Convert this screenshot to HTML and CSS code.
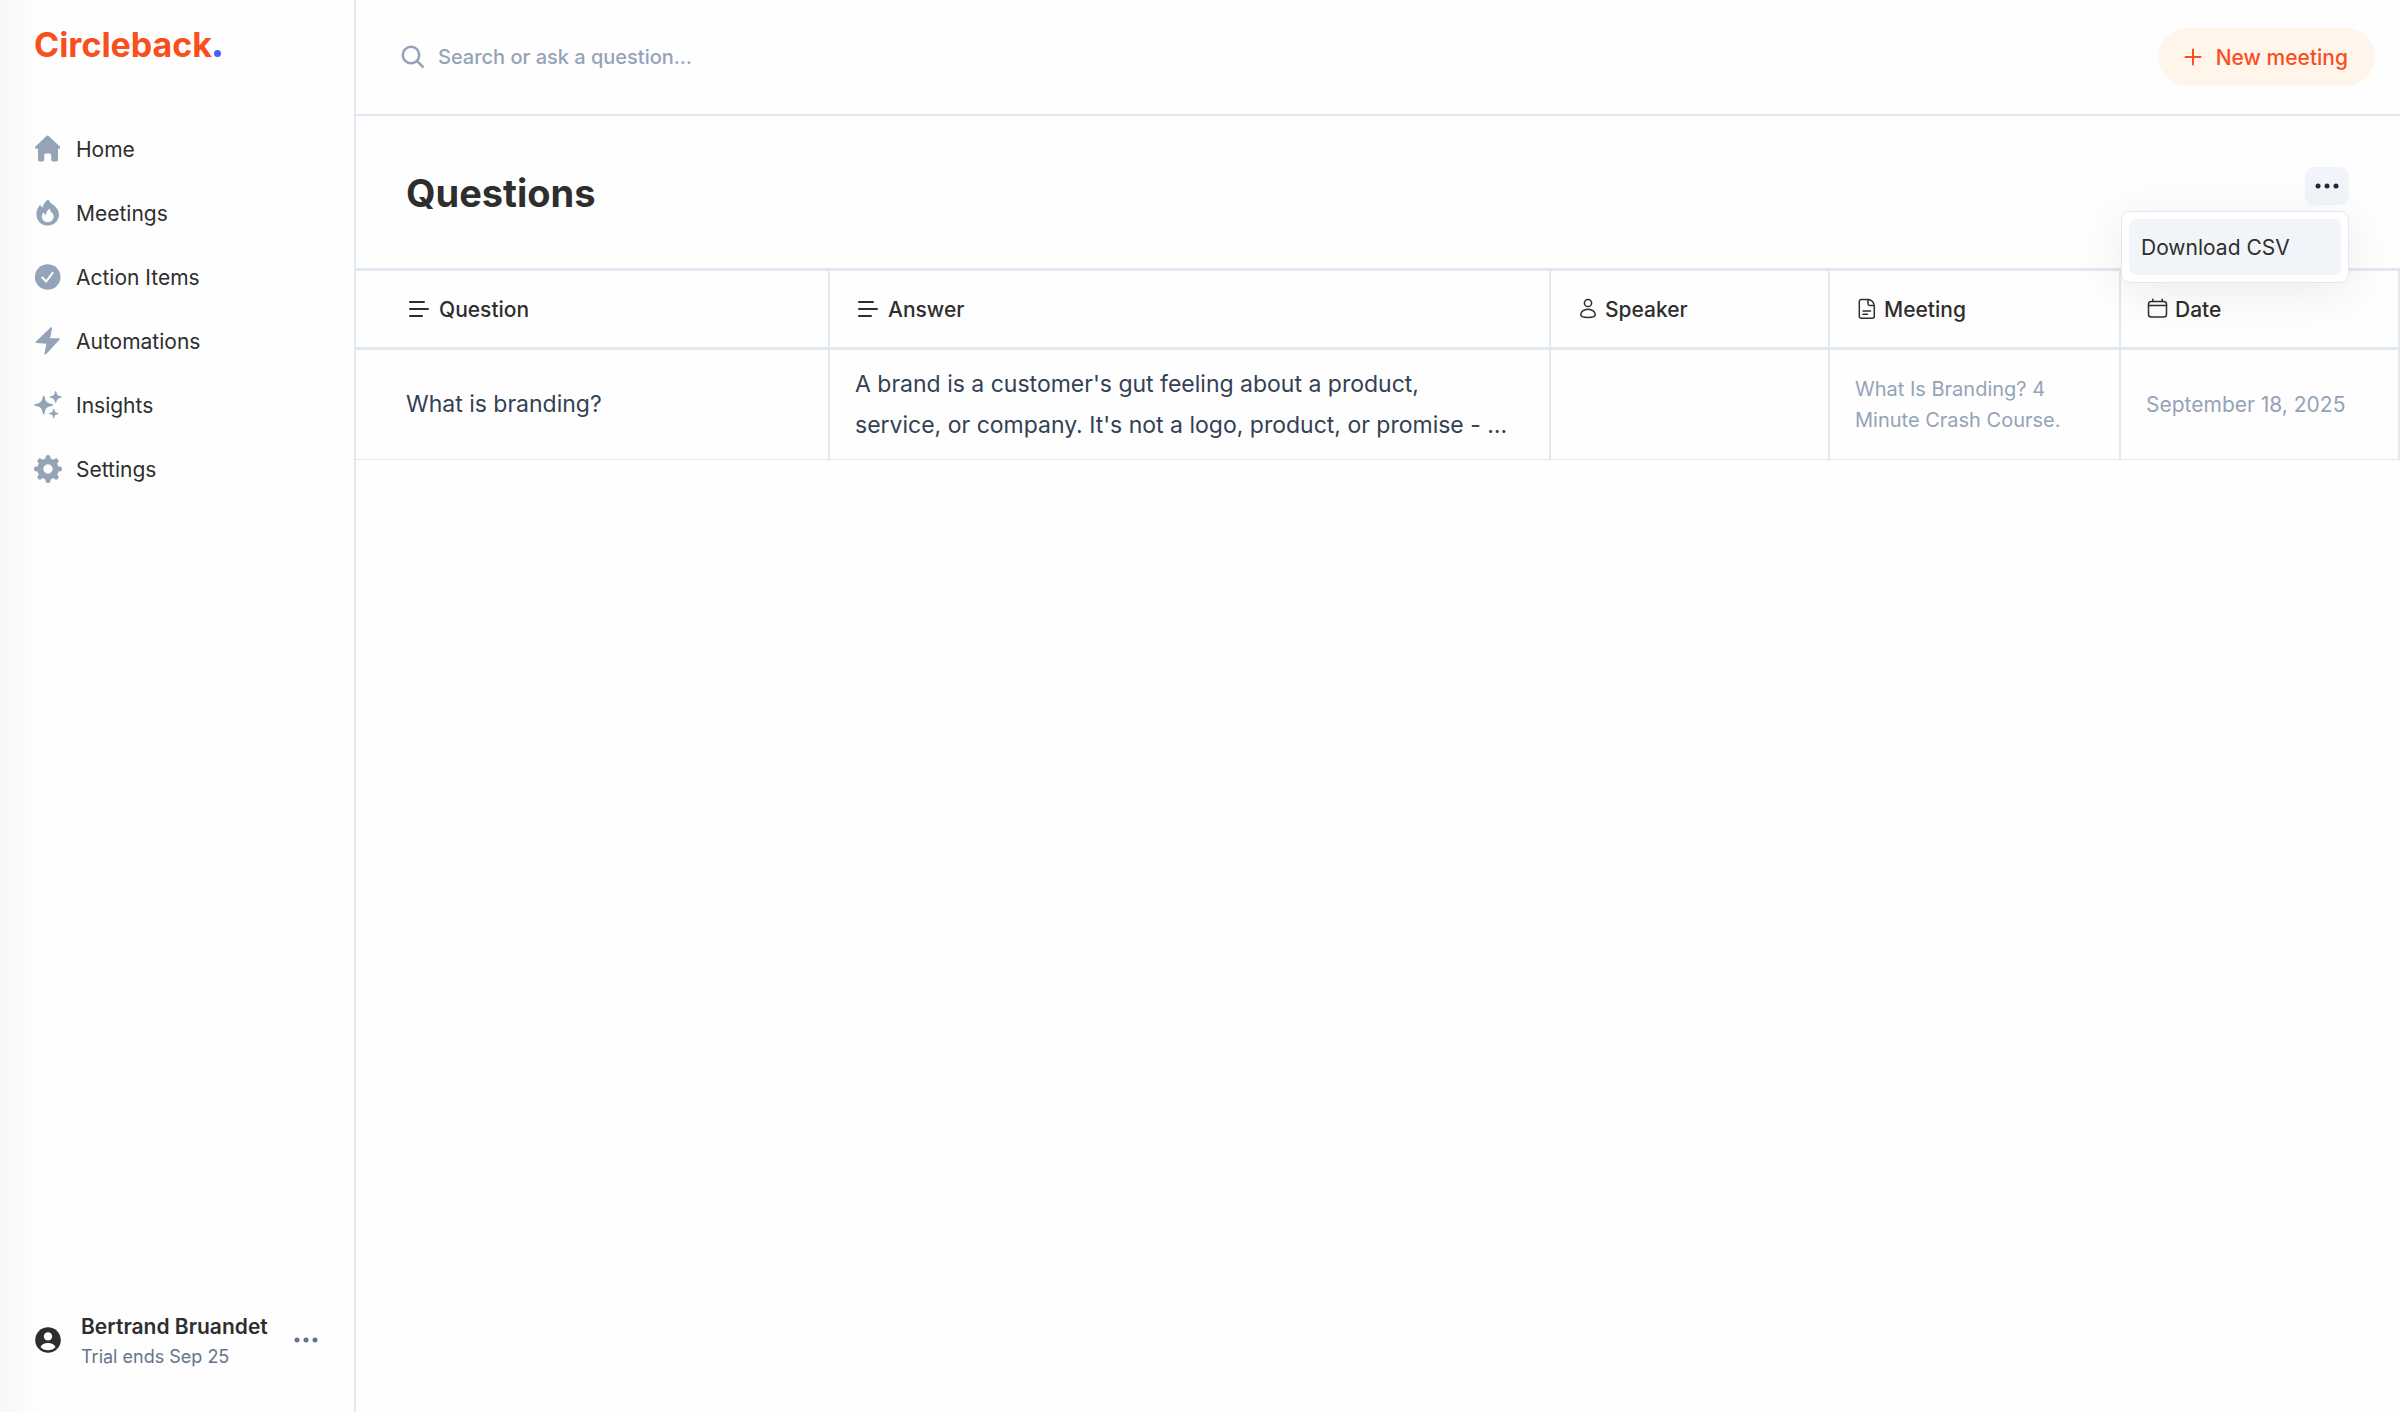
FILE: index.html
```html
<!DOCTYPE html>
<html lang="en">
<head>
    <meta charset="utf-8">
    <title>Questions - Circleback</title>
    <meta name="viewport" content="width=device-width, initial-scale=1">
    <link rel="stylesheet" href="styles.css">
</head>
<body>
    <aside class="sidebar">
        <a class="logo" href="#">Circleback<span class="logo-dot"></span></a>

        <nav class="nav">
            <a class="nav-link" href="#">
                <svg class="nav-icon" viewBox="0 0 28 28"><path d="M12.2 1.3a2 2 0 0 1 2.8 0L25.8 11.600c.8.8.3 2.100-.8 2.100H24v10.800a1.900 1.900 0 0 1-1.900 1.900h-3a1.900 1.900 0 0 1-1.900-1.900V20a1.500 1.500 0 0 0-1.500-1.500h-4A1.500 1.500 0 0 0 10.200 20v4.500a1.900 1.900 0 0 1-1.900 1.900H5.900A1.900 1.900 0 0 1 4 24.500V13.700H2.200c-1.100 0-1.600-1.300-.8-2.100z"/></svg>
                Home
            </a>
            <a class="nav-link" href="#">
                <svg class="nav-icon" viewBox="0 0 28 28"><path fill-rule="evenodd" d="M13 1.300c.6-.7 1.500-.6 2 .1 1.100 1.600 2 2.800 3.800 4.100 3.700 2.600 6.200 6 6.200 10 0 6.200-5 11-11.300 11S2.400 21.600 2.400 15.400c0-3.300 1-6.200 2.900-8.600.6-.8 1.500-.6 1.900.2.3.7.8 1.200 1.500 1.600.3-3 2-5.400 4.300-7.300zM15.300 9.900c-2.200 1.100-3.300 3.300-3.300 6.200-.9-.4-1.500-1-1.900-1.800-.3-.6-.9-.7-1.300-.1-.7 1-1 2.100-1 3.300 0 3.300 2.600 5.700 6 5.700 3.300 0 5.900-2.400 5.900-5.700 0-1.600-.8-3-1.900-3.900-1-.8-1.600-1.900-1.600-3.100 0-.5-.4-.8-.9-.6z"/></svg>
                Meetings
            </a>
            <a class="nav-link" href="#">
                <svg class="nav-icon" viewBox="0 0 28 28"><circle cx="13.700" cy="14" r="12.800"/><path class="tick" d="M8.300 14.500l3.900 4L18.600 9.800"/></svg>
                Action Items
            </a>
            <a class="nav-link" href="#">
                <svg class="nav-icon" viewBox="0 0 28 28"><path d="M16.500.600c.8-.7 1.700-.2 1.500.8L16.100 11.200h8.700c.9 0 1.300.8.7 1.500L12 27.300c-.7.7-1.700.3-1.500-.7l1.900-9.900-9.700-.6c-.9-.1-1.300-.8-.7-1.500z"/></svg>
                Automations
            </a>
            <a class="nav-link" href="#">
                <svg class="nav-icon" viewBox="0 0 28 28"><path d="M9.700 4.500c.4 0 .7.200.8.700 1.200 5.800 1.900 6.500 7.900 7.900.9.200.9 1.400 0 1.600-6 1.400-6.700 2.100-7.900 8-.2.900-1.400.9-1.600 0-1.200-5.900-1.900-6.600-7.900-8-.9-.2-.9-1.400 0-1.600 6-1.400 6.700-2.100 7.900-7.900.1-.5.4-.7.8-.7zM21.700.1c.3 0 .5.200.6.500.7 3.500 1.200 4 4.800 4.900.7.100.7 1 0 1.200-3.600.8-4.100 1.300-4.800 4.800-.1.600-1 .6-1.200 0-.7-3.500-1.200-4-4.800-4.800-.7-.2-.7-1.100 0-1.200 3.600-.9 4.100-1.400 4.800-4.900.1-.3.300-.5.600-.5zM19.700 17.700c.3 0 .5.200.6.500.6 2.700 1 3.100 3.800 3.800.6.100.6.900 0 1.100-2.800.6-3.200 1-3.800 3.800-.1.500-1 .5-1.100 0-.6-2.800-1-3.200-3.800-3.800-.6-.2-.6-1 0-1.100 2.800-.7 3.200-1.100 3.800-3.800 0-.3.200-.5.500-.5z"/></svg>
                Insights
            </a>
            <a class="nav-link" href="#">
                <svg class="nav-icon gear" viewBox="0 0 28 28"><circle cx="14" cy="14" r="7.700"/><path d="M14 4V2.500M14 24v1.500M4 14H2.500M24 14h1.500M6.900 6.900l-1-1M21.100 6.900l1-1M6.900 21.100l-1 1M21.100 21.100l1 1"/></svg>
                Settings
            </a>
        </nav>

        <div class="user">
            <svg class="user-icon" viewBox="0 0 26 26"><circle cx="13" cy="13" r="12.800"/><circle class="face" cx="13" cy="9.400" r="4.200"/><path class="face" d="M5.500 20c1.200-2.600 4-4 7.500-4s6.300 1.400 7.500 4c-1.900 2.100-4.500 3.300-7.500 3.300S7.400 22.100 5.500 20z"/></svg>
            <div class="user-text">
                <div class="user-name">Bertrand Bruandet</div>
                <div class="user-plan">Trial ends Sep 25</div>
            </div>
            <button class="user-more" aria-label="Account menu">
                <svg class="dots" viewBox="0 0 24 6"><circle cx="3" cy="3" r="2.500"/><circle cx="12" cy="3" r="2.500"/><circle cx="21" cy="3" r="2.500"/></svg>
            </button>
        </div>
    </aside>

    <main class="main">
        <header class="topbar">
            <label class="search">
                <svg class="search-icon" viewBox="0 0 24 24"><circle cx="10" cy="10" r="8.200"/><path d="M16 16l6.500 6.500"/></svg>
                <input type="text" class="search-input" placeholder="Search or ask a question…" aria-label="Search or ask a question">
            </label>
            <button class="new-btn">
                <svg class="plus" viewBox="0 0 18 18"><path d="M9 1.500v15M1.500 9h15"/></svg>
                New meeting
            </button>
        </header>

        <div class="page-head">
            <h1 class="title">Questions</h1>
            <div class="more">
                <button class="more-btn" aria-label="More options">
                    <svg class="dots" viewBox="0 0 24 6"><circle cx="3" cy="3" r="2.500"/><circle cx="12" cy="3" r="2.500"/><circle cx="21" cy="3" r="2.500"/></svg>
                </button>
                <div class="menu">
                    <button class="menu-item">Download CSV</button>
                </div>
            </div>
        </div>

        <table class="grid">
            <colgroup>
                <col class="col-question">
                <col>
                <col class="col-side">
                <col class="col-meeting">
                <col class="col-side">
            </colgroup>
            <thead>
                <tr>
                    <th><div class="th"><svg class="th-icon wide" viewBox="0 0 24 24"><path class="bold" d="M3 5h14M3 12h18M3 19h12"/></svg>Question</div></th>
                    <th><div class="th"><svg class="th-icon wide" viewBox="0 0 24 24"><path class="bold" d="M3 5h14M3 12h18M3 19h12"/></svg>Answer</div></th>
                    <th><div class="th"><svg class="th-icon" viewBox="0 0 22 22"><circle cx="11" cy="5" r="3.600"/><path d="M11 11.200c-4.200 0-7.300 2.800-7.300 5.600 0 2 3 2.700 7.300 2.700s7.300-.7 7.300-2.700c0-2.800-3.100-5.600-7.300-5.600z"/></svg>Speaker</div></th>
                    <th><div class="th"><svg class="th-icon" viewBox="0 0 22 22"><path d="M12 1.500H5.300a2 2 0 0 0-2 2v14.700a2 2 0 0 0 2 2h11a2 2 0 0 0 2-2V8.100c0-3.500-2.800-6.600-6.300-6.600zM12 1.500V5.800c0 1 .6 1.600 1.600 1.600h4.500M7 13h7.500M7 16.200h4.500"/></svg>Meeting</div></th>
                    <th><div class="th"><svg class="th-icon" viewBox="0 0 22 22"><rect x="1.500" y="3.500" width="18" height="15.500" rx="2.800"/><path d="M1.500 7.500h18M5.800 1.200v2.300M15.200 1.200v2.300"/></svg>Date</div></th>
                </tr>
            </thead>
            <tbody>
                <tr>
                    <td>What is branding?</td>
                    <td>A brand is a customer's gut feeling about a product,<br>service, or company. It's not a logo, product, or promise - …</td>
                    <td></td>
                    <td class="meeting"><a class="meeting-link" href="#">What Is Branding? 4 Minute Crash Course.</a></td>
                    <td class="date">September 18, 2025</td>
                </tr>
            </tbody>
        </table>
    </main>
</body>
</html>
```
FILE: styles.css
```css
* { box-sizing: border-box; }
body { margin: 0; display: flex; min-height: 100vh; font-family: Inter, "Open Sans", sans-serif; font-size: 21px; color: #2e2e2e; background: #fefefe; }
a { color: inherit; text-decoration: none; }
button { font: inherit; color: inherit; border: none; background: none; padding: 0; cursor: pointer; }

/* Sidebar */
.sidebar { width: 356px; flex-shrink: 0; display: flex; flex-direction: column; padding: 24px 34px 40px; border-right: 2px solid #e2e8f0; background: linear-gradient(to right, #f7f7f7, #fefefe 42px); }
.logo { display: flex; align-items: baseline; font-size: 34px; line-height: 42px; font-weight: 700; color: #f94e1d; }
.logo-dot { width: 7px; height: 7px; margin-left: 2px; border-radius: 50%; background: #4361ff; }
.nav { display: flex; flex-direction: column; gap: 24px; margin-top: 63px; }
.nav-link { display: flex; align-items: center; gap: 14px; height: 40px; }
.nav-icon { width: 28px; height: 28px; fill: #94a3b8; }
.tick { fill: none; stroke: #fff; stroke-width: 2; stroke-linecap: round; stroke-linejoin: round; }
.gear { fill: none; stroke: #94a3b8; stroke-width: 6; }
.gear path { stroke-width: 5; stroke-linecap: round; }

.user { display: flex; align-items: center; gap: 20px; margin-top: auto; padding: 0 2px 0 1px; }
.user-icon { width: 26px; height: 26px; fill: #2e2e2e; }
.user-icon .face { fill: #fff; }
.user-text { flex: 1; padding-top: 4px; white-space: nowrap; line-height: 30px; }
.user-name { font-weight: 600; }
.user-plan { font-size: 18px; color: #64748b; }
.user-more { display: flex; color: #64748b; }
.dots { width: 24px; height: 6px; fill: currentColor; }

/* Top bar */
.main { flex: 1; min-width: 0; }
.topbar { display: flex; align-items: center; height: 116px; padding: 0 25px 0 45px; border-bottom: 2px solid #e2e8f0; }
.search { flex: 1; display: flex; align-items: center; gap: 13px; }
.search-icon { width: 24px; height: 24px; fill: none; stroke: #94a3b8; stroke-width: 2.5; }
.search-input { flex: 1; padding: 0; border: none; outline: none; background: none; font: inherit; font-size: 20px; font-weight: 500; }
.search-input::placeholder { color: #94a3b8; opacity: 1; }
.new-btn { display: flex; align-items: center; gap: 14px; height: 58px; padding: 0 27px 0 26px; border-radius: 29px; background: #fff5eb; color: #f94e1d; font-weight: 500; }
.plus { width: 18px; height: 18px; fill: none; stroke: currentColor; stroke-width: 2; stroke-linecap: round; }

/* Page header */
.page-head { display: flex; justify-content: space-between; align-items: flex-start; height: 152px; padding: 51px 51px 0 50px; }
.title { margin: 0; font-size: 38px; line-height: 52px; font-weight: 700; }
.more { position: relative; }
.more-btn { display: flex; align-items: center; justify-content: center; width: 44px; height: 38px; border-radius: 9px; background: #f1f5f9; color: #1e293b; }
.menu { position: absolute; top: 44px; right: 0; width: 228px; padding: 7px; border: 1px solid #e2e8f0; border-radius: 9px; background: #fff; box-shadow: 0 8px 48px rgba(0,0,0,0.08); }
.menu-item { width: 100%; height: 56px; padding: 0 12px; border-radius: 8px; background: #f1f5f9; text-align: left; }

/* Questions table */
.grid { width: 100%; table-layout: fixed; border-collapse: separate; border-spacing: 0; }
.col-question { width: 474px; }
.col-side { width: 279px; }
.col-meeting { width: 291px; }
.grid th { height: 82px; padding: 0 24px 0 26px; border-top: 3px solid #e2e8f0; border-bottom: 3px solid #e2e8f0; border-right: 2px solid #e2e8f0; font-weight: 500; text-align: left; }
.grid td { height: 110px; padding: 0 24px 0 25px; border-right: 2px solid #e2e8f0; border-bottom: 1px solid #e2e8f0; font-size: 23px; line-height: 41px; color: #334155; }
.grid th:first-child { padding-left: 51px; }
.grid td:first-child { padding-left: 50px; }
.grid .meeting { font-size: 20px; line-height: 31px; color: #94a3b8; }
.grid .date { font-size: 21px; color: #94a3b8; }
.th { display: flex; align-items: center; gap: 6px; }
.th-icon { width: 22px; height: 22px; fill: none; stroke: #2e2e2e; stroke-width: 1.5; stroke-linecap: round; stroke-linejoin: round; }
.th-icon.wide { width: 24px; height: 24px; margin-right: 2px; }
.th-icon .bold { stroke-width: 2; }
```
